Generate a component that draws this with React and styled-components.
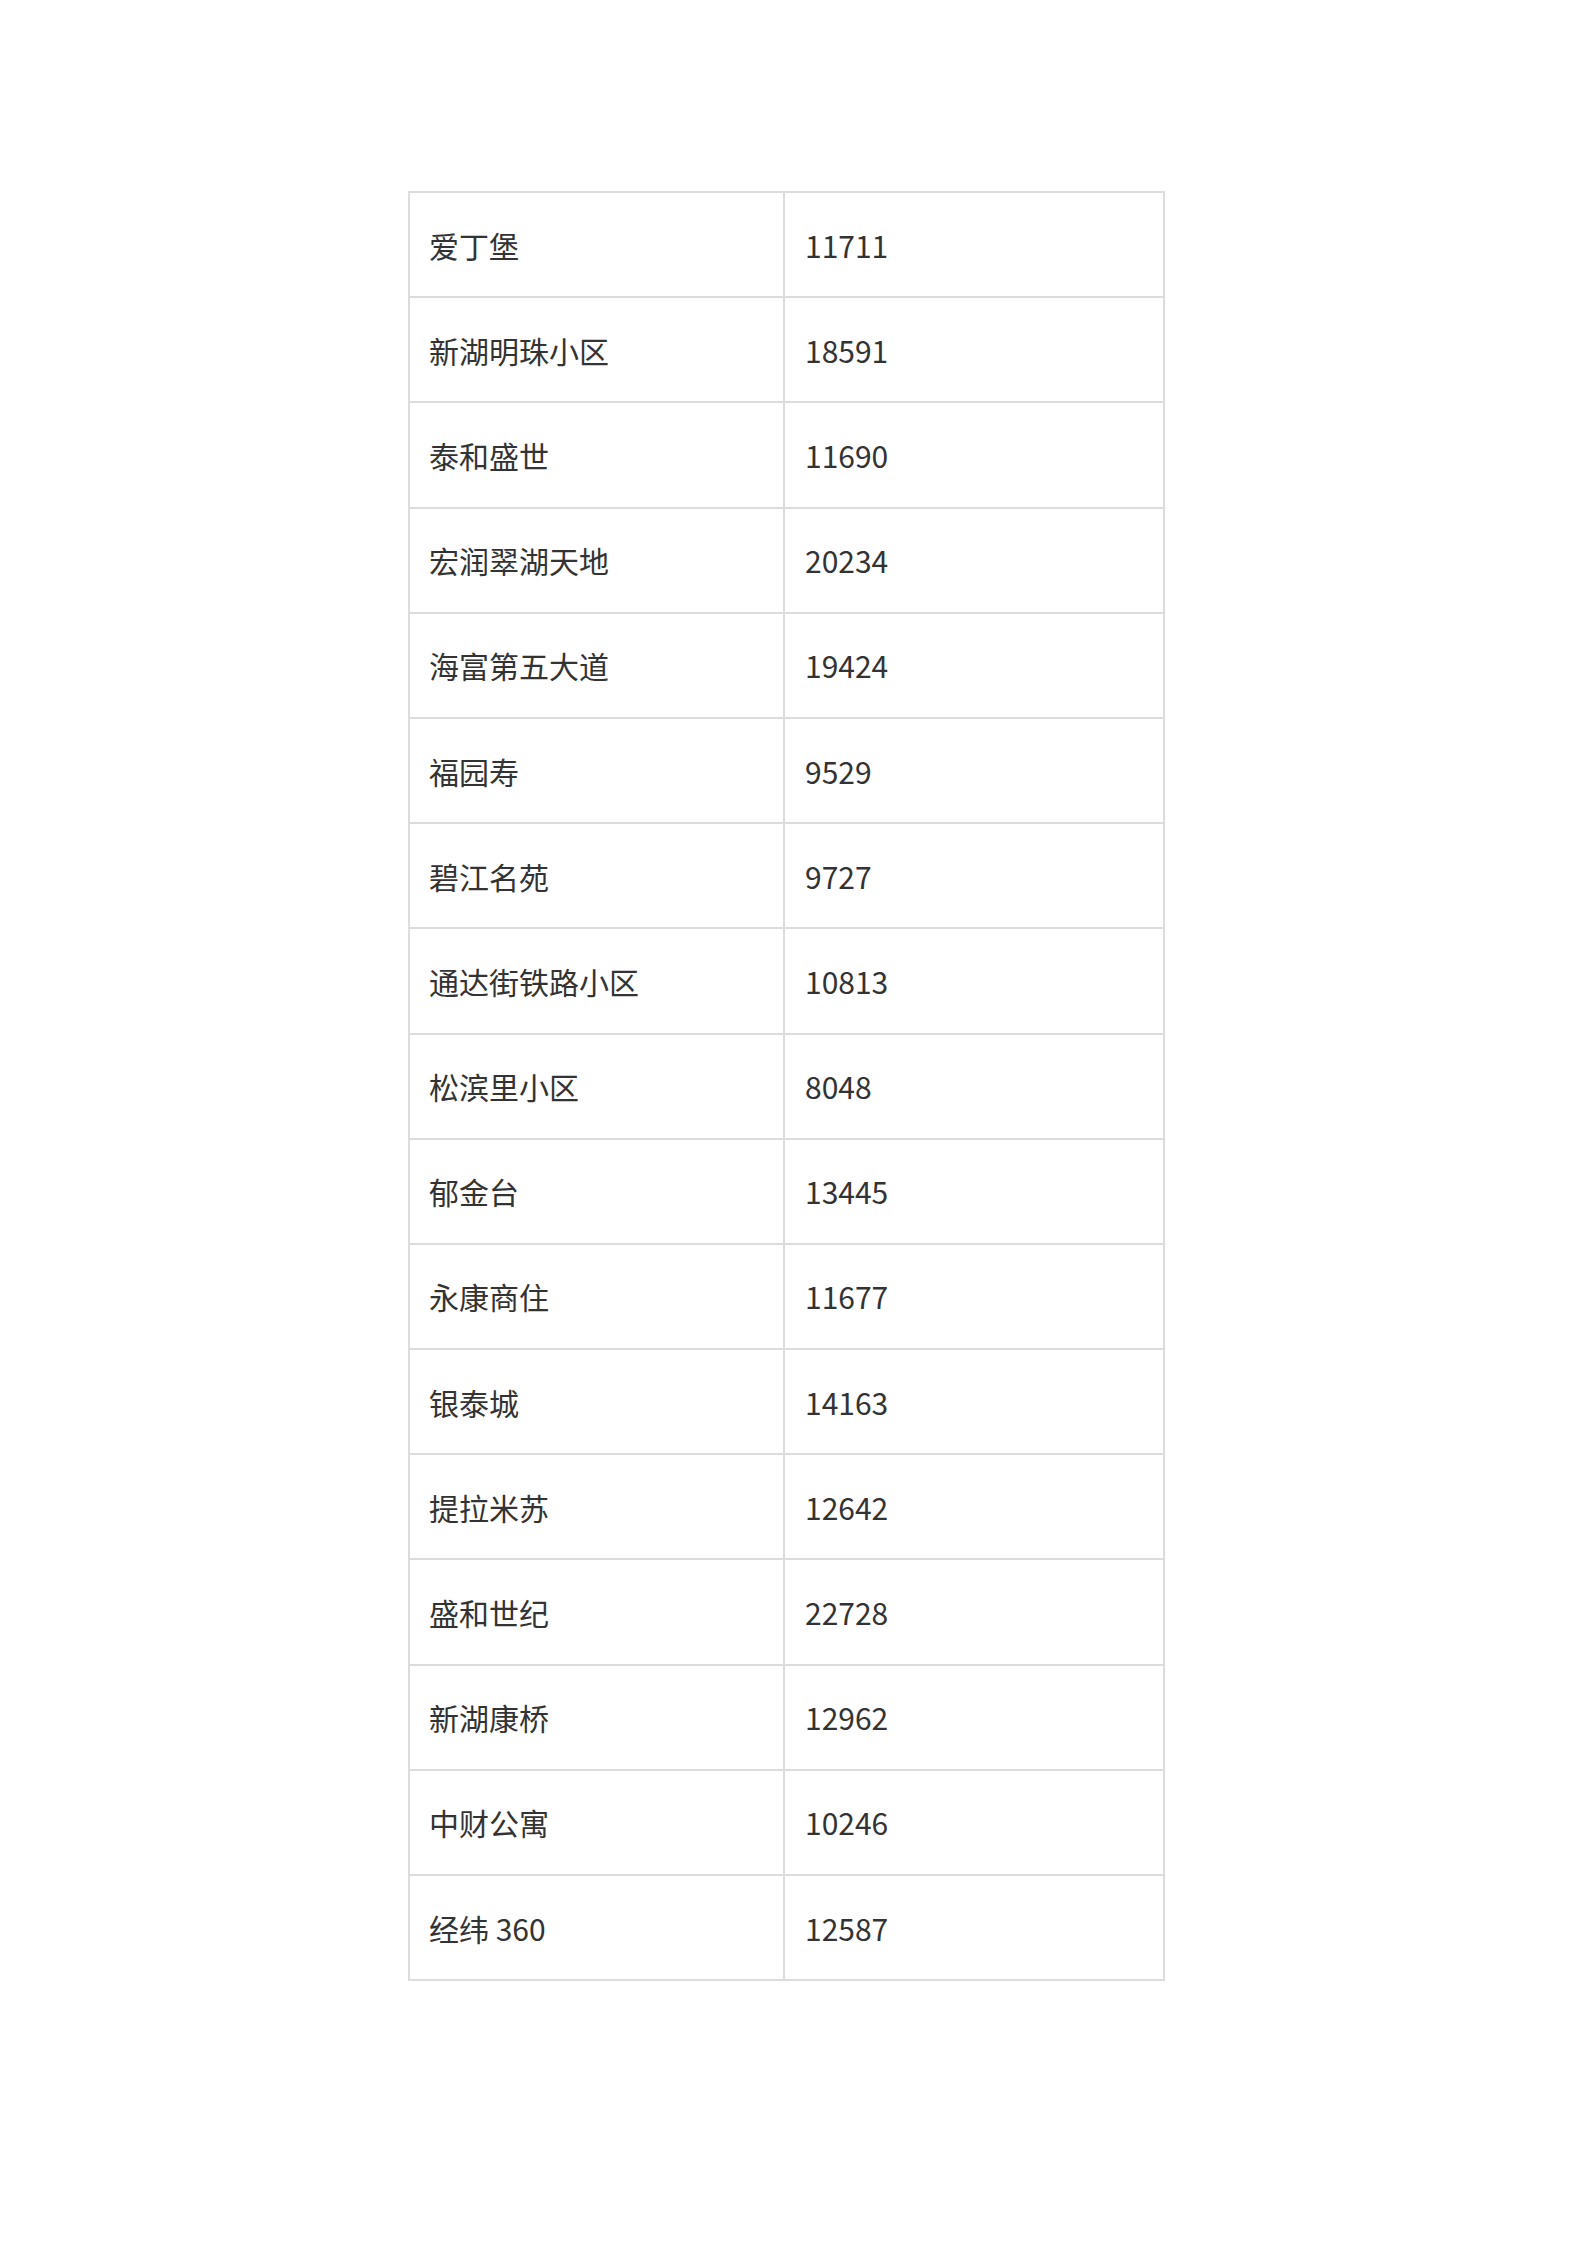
import React from 'react';
import styled, { createGlobalStyle } from 'styled-components';

const rows = [
    ['爱丁堡', '11711'],
    ['新湖明珠小区', '18591'],
    ['泰和盛世', '11690'],
    ['宏润翠湖天地', '20234'],
    ['海富第五大道', '19424'],
    ['福园寿', '9529'],
    ['碧江名苑', '9727'],
    ['通达街铁路小区', '10813'],
    ['松滨里小区', '8048'],
    ['郁金台', '13445'],
    ['永康商住', '11677'],
    ['银泰城', '14163'],
    ['提拉米苏', '12642'],
    ['盛和世纪', '22728'],
    ['新湖康桥', '12962'],
    ['中财公寓', '10246'],
    ['经纬 360', '12587'],
];

const GlobalStyle = createGlobalStyle`
    body{
        margin: 0;
        background: #ffffff;
        font-family: "Noto Sans CJK SC", "Noto Sans", sans-serif;
    }
`

const App = () => {
    return (
        <Page>
            <GlobalStyle />
            <PriceTable>
                <colgroup>
                    <col style={{ width: '375px' }} />
                    <col />
                </colgroup>
                <tbody>
                    {rows.map(([name, price]) => (
                        <Row key={name}>
                            <NameCell>{name}</NameCell>
                            <PriceCell>{price}</PriceCell>
                        </Row>
                    ))}
                </tbody>
            </PriceTable>
        </Page>
    )
}

const Page = styled.div`
    padding: 191px 0 260px 408px;
`
const PriceTable = styled.table`
    width: 757px;
    border-collapse: collapse;
    table-layout: fixed;
    color: #333333;
    font-size: 30px;
`
const Row = styled.tr`
    height: 105.2px;
`
const Cell = styled.td`
    box-sizing: border-box;
    border: 2px solid #dcdcdc;
    padding: 0 19px;
    vertical-align: middle;
    white-space: nowrap;
`
const NameCell = styled(Cell)``
const PriceCell = styled(Cell)`
    padding-left: 20px;
`

export default App;
